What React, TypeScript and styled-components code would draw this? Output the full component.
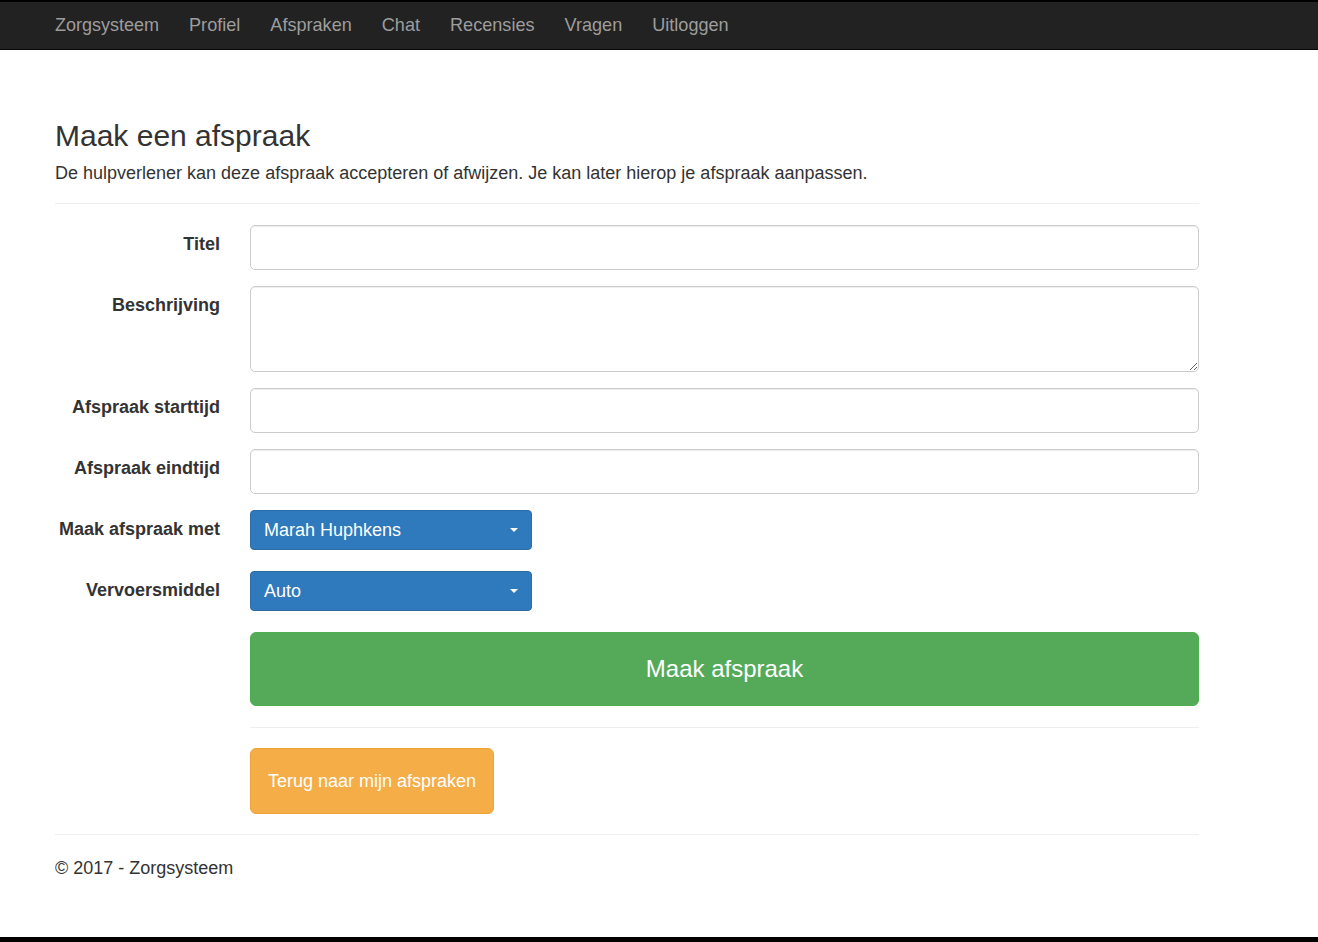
import React from "react";
import styled, { createGlobalStyle } from "styled-components";

const Global = createGlobalStyle`
  html, body { margin: 0; padding: 0; }
  body {
    font-family: "Liberation Sans", Arial, Helvetica, sans-serif;
    color: #333;
    background: #000;
  }
  * { box-sizing: border-box; }
`;

const Frame = styled.div`
  display: flex;
  flex-direction: column;
  height: 942px;
  padding-top: 2px;
  padding-bottom: 5px;
  background: #000;
`;

const NavBar = styled.nav`
  height: 48px;
  flex: none;
  background: #222;
  border-bottom: 1px solid #080808;
  display: flex;
  align-items: center;
  padding: 0 0 2px 40px;
`;

const NavLink = styled.a<{ $brand?: boolean }>`
  color: #9d9d9d;
  font-size: ${(p) => (p.$brand ? "18px" : "18.1px")};
  padding: 0 15px;
  text-decoration: none;
  line-height: 44px;
`;

const Main = styled.main`
  flex: 1;
  background: #fff;
  padding: 0 119px 0 55px;
`;

const Heading = styled.h2`
  margin: 0;
  padding-top: 69px;
  font-size: 30px;
  font-weight: 400;
  line-height: 1.1;
  color: #333;
`;

const Lead = styled.p`
  margin: 9px 0 0;
  font-size: 18px;
  line-height: 24px;
`;

const Rule = styled.hr<{ $top: number; $bottom: number; $indent?: boolean }>`
  border: 0;
  border-top: 1px solid #eee;
  margin: ${(p) => p.$top}px 0 ${(p) => p.$bottom}px ${(p) => (p.$indent ? "195px" : "0")};
`;

const Form = styled.form`
  display: grid;
  grid-template-columns: 165px 1fr;
  column-gap: 30px;
  row-gap: 16px;
`;

const Label = styled.label`
  text-align: right;
  font-weight: 700;
  font-size: 18px;
  line-height: 24px;
  padding-top: 7px;
`;

const Input = styled.input`
  display: block;
  width: 100%;
  height: 45px;
  border: 1px solid #ccc;
  border-radius: 5px;
  box-shadow: inset 0 1px 1px rgba(0, 0, 0, 0.075);
  font: inherit;
  padding: 6px 12px;
`;

const TextArea = styled.textarea`
  display: block;
  width: 100%;
  height: 86px;
  border: 1px solid #ccc;
  border-radius: 5px;
  box-shadow: inset 0 1px 1px rgba(0, 0, 0, 0.075);
  font: inherit;
  padding: 6px 12px;
  resize: vertical;
`;

const SelectCell = styled.div`
  height: 45px;
`;

const SelectBox = styled.div`
  width: 282px;
  height: 40px;
  background: #2f79bd;
  border: 1px solid #2e6da4;
  border-radius: 4px;
  color: #fff;
  font-size: 18px;
  display: flex;
  align-items: center;
  justify-content: space-between;
  padding: 0 13px 0 13px;
`;

const Caret = styled.span`
  width: 0;
  height: 0;
  border-left: 4px solid transparent;
  border-right: 4px solid transparent;
  border-top: 4px solid #fff;
`;

const SubmitButton = styled.button`
  grid-column: 2;
  height: 74px;
  width: 100%;
  background: #55aa59;
  border: 1px solid #4cae4c;
  border-radius: 6px;
  color: #fff;
  font-family: inherit;
  font-size: 24px;
`;

const Lower = styled.div`
  padding-left: 195px;
`;

const BackButton = styled.a`
  display: inline-flex;
  align-items: center;
  height: 66px;
  padding: 0 17px;
  background: #f5ad48;
  border: 1px solid #eea236;
  border-radius: 6px;
  color: #fff;
  font-size: 18px;
  text-decoration: none;
`;

const Footer = styled.footer`
  font-size: 18px;
  line-height: 24px;
  margin-top: 21px;
`;

const navItems = ["Profiel", "Afspraken", "Chat", "Recensies", "Vragen", "Uitloggen"];

function Select({ value }: { value: string }) {
  return (
    <SelectCell>
      <SelectBox>
        <span>{value}</span>
        <Caret />
      </SelectBox>
    </SelectCell>
  );
}

export default function App() {
  return (
    <>
      <Global />
      <Frame>
        <NavBar>
          <NavLink $brand href="#">Zorgsysteem</NavLink>
          {navItems.map((n) => (
            <NavLink key={n} href="#">{n}</NavLink>
          ))}
        </NavBar>
        <Main>
          <Heading>Maak een afspraak</Heading>
          <Lead>
            De hulpverlener kan deze afspraak accepteren of afwijzen. Je kan later hierop je afspraak aanpassen.
          </Lead>
          <Rule $top={18} $bottom={21} />
          <Form>
            <Label>Titel</Label>
            <Input type="text" />
            <Label>Beschrijving</Label>
            <TextArea />
            <Label>Afspraak starttijd</Label>
            <Input type="text" />
            <Label>Afspraak eindtijd</Label>
            <Input type="text" />
            <Label>Maak afspraak met</Label>
            <Select value="Marah Huphkens" />
            <Label>Vervoersmiddel</Label>
            <Select value="Auto" />
            <SubmitButton type="button">Maak afspraak</SubmitButton>
          </Form>
          <Rule $top={21} $bottom={20} $indent />
          <Lower>
            <BackButton href="#">Terug naar mijn afspraken</BackButton>
          </Lower>
          <Rule $top={20} $bottom={0} />
          <Footer>© 2017 - Zorgsysteem</Footer>
        </Main>
      </Frame>
    </>
  );
}
